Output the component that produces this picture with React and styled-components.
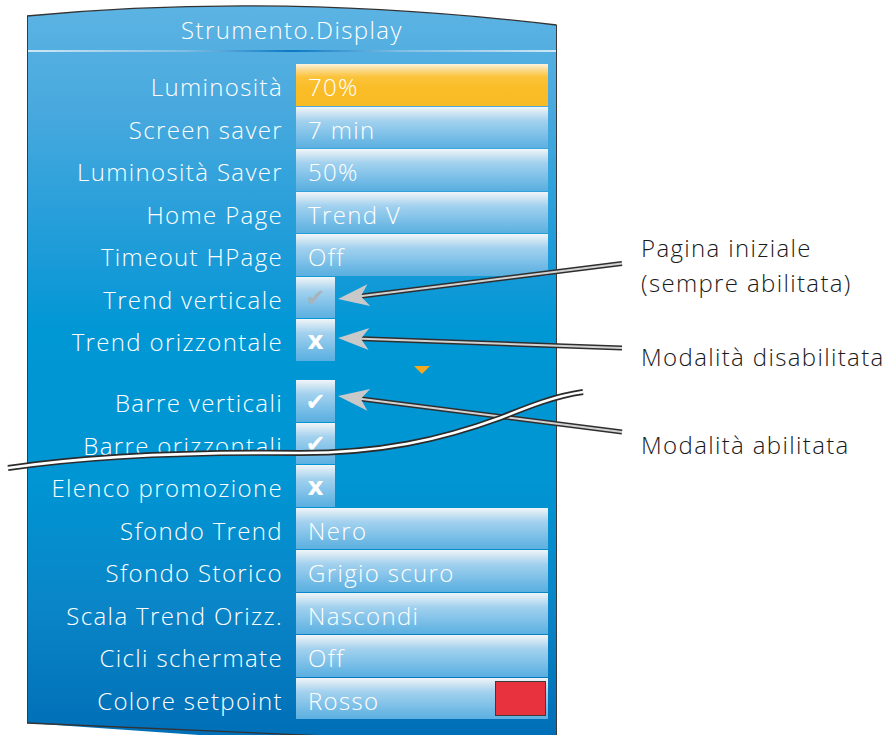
import React from "react";
import styled, { createGlobalStyle } from "styled-components";

const GlobalStyle = createGlobalStyle`
  html, body { margin: 0; padding: 0; background: #ffffff; }
  body { font-family: "Open Sans", "Noto Sans", "Liberation Sans", sans-serif; font-weight: 350; }
`;

const Page = styled.div`
  position: relative;
  width: 887px;
  height: 735px;
  overflow: hidden;
  display: flex;
  align-items: flex-start;
`;

const Screen = styled.div`
  margin-left: 27px;
  width: 530px;
  min-height: 760px;
  box-sizing: border-box;
  border-left: 1px solid #3a3a3a;
  border-right: 1px solid #3a3a3a;
  clip-path: path("M0,16 Q250,-8 530,25 L530,760 L0,723 Z");
  background: linear-gradient(
    to bottom,
    #5db4e3 0px,
    #48a9de 110px,
    #1a9bd8 260px,
    #0097d5 330px,
    #0095d3 480px,
    #0a85c7 610px,
    #006fb7 735px
  );
  display: flex;
  flex-direction: column;
`;

const Title = styled.div`
  height: 50px;
  padding-top: 9px;
  box-sizing: border-box;
  display: flex;
  align-items: center;
  justify-content: center;
  color: #ffffff;
  font-size: 24px;
  letter-spacing: 1.4px;
`;

const Separator = styled.div`
  height: 2px;
  background: linear-gradient(
    to right,
    #cfe7f5 0%,
    #7fbde4 30%,
    #0a78c4 50%,
    #7fbde4 70%,
    #cfe7f5 100%
  );
`;

const Rows = styled.div`
  margin-top: 12px;
  display: flex;
  flex-direction: column;
`;

const Row = styled.div`
  height: 42.5px;
  display: grid;
  grid-template-columns: 268px 252px;
  align-items: start;
`;

const Label = styled.div`
  height: 42px;
  padding-right: 13px;
  padding-top: 3px;
  box-sizing: border-box;
  display: flex;
  align-items: center;
  justify-content: flex-end;
  color: #ffffff;
  font-size: 24px;
  letter-spacing: 1.35px;
  white-space: nowrap;
`;

const boxGradient = `linear-gradient(
  to bottom,
  #f1f5f8 0px,
  #cfe5f3 6px,
  #a2d1ee 14px,
  #88c5ea 24px,
  #6cb8e4 34px,
  #5aafe0 42px
)`;

const activeGradient = `linear-gradient(
  to bottom,
  #fdf3de 0px,
  #fcd98a 6px,
  #fbc33a 13px,
  #fabd28 24px,
  #f9bb24 42px
)`;

const Value = styled.div`
  height: 41.5px;
  box-sizing: border-box;
  padding-left: 12px;
  padding-top: 4px;
  display: flex;
  align-items: center;
  justify-content: space-between;
  color: #ffffff;
  font-size: 24px;
  letter-spacing: 1.35px;
  background: ${(p) => (p.$active ? activeGradient : boxGradient)};
`;

const Check = styled.div`
  width: 39px;
  height: 41.5px;
  display: flex;
  align-items: center;
  justify-content: center;
  padding-top: 2px;
  box-sizing: border-box;
  background: ${boxGradient};
  color: ${(p) => (p.$dim ? "#a8b4bd" : "#ffffff")};
  font-family: "DejaVu Sans", sans-serif;
  font-weight: bold;
  font-size: ${(p) => (p.$cross ? "25px" : "24px")};
`;

const Swatch = styled.div`
  width: 51px;
  height: 35px;
  margin-right: 2px;
  margin-top: -4px;
  box-sizing: border-box;
  background: #e8323e;
  border: 1px solid #3b3b3b;
`;

const Gap = styled.div`
  height: 18.5px;
  padding-left: 386px;
  padding-top: 4px;
  box-sizing: border-box;
`;

const Marker = styled.div`
  width: 0;
  height: 0;
  border-left: 8px solid transparent;
  border-right: 8px solid transparent;
  border-top: 8px solid #f5a81c;
`;

const Notes = styled.div`
  margin-left: 84px;
  padding-top: 230px;
  display: flex;
  flex-direction: column;
  color: #1a1a1a;
  font-size: 24px;
  letter-spacing: 1.35px;
  line-height: 35px;
  white-space: nowrap;
`;

const Note = styled.div`
  margin-top: ${(p) => p.$gap || 0}px;
`;

const Overlay = styled.svg`
  position: absolute;
  left: 0;
  top: 0;
  width: 887px;
  height: 735px;
  pointer-events: none;
`;

const topRows = [
  { label: "Luminosità", value: "70%", active: true },
  { label: "Screen saver", value: "7 min" },
  { label: "Luminosità Saver", value: "50%" },
  { label: "Home Page", value: "Trend V" },
  { label: "Timeout HPage", value: "Off" },
  { label: "Trend verticale", check: "dim" },
  { label: "Trend orizzontale", check: "cross" },
];

const bottomRows = [
  { label: "Barre verticali", check: "on" },
  { label: "Barre orizzontali", check: "on" },
  { label: "Elenco promozione", check: "cross" },
  { label: "Sfondo Trend", value: "Nero" },
  { label: "Sfondo Storico", value: "Grigio scuro" },
  { label: "Scala Trend Orizz.", value: "Nascondi" },
  { label: "Cicli schermate", value: "Off" },
  { label: "Colore setpoint", value: "Rosso", swatch: true },
];

function SettingRow({ item }) {
  return (
    <Row>
      <Label>{item.label}</Label>
      {item.check ? (
        <Check $dim={item.check === "dim"} $cross={item.check === "cross"}>
          {item.check === "cross" ? "x" : "✔"}
        </Check>
      ) : (
        <Value $active={item.active}>
          <span>{item.value}</span>
          {item.swatch && <Swatch />}
        </Value>
      )}
    </Row>
  );
}

function Arrow({ x, y, x2, y2 }) {
  const ang = (Math.atan2(y2 - y, x2 - x) * 180) / Math.PI;
  const d = `M${x + 10},${y + ((y2 - y) * 10) / (x2 - x)} L${x2},${y2}`;
  return (
    <g>
      <path d={d} stroke="#2e2e2e" strokeWidth="5" fill="none" />
      <path d={d} stroke="#d2d2d2" strokeWidth="2" fill="none" />
      <polygon
        points="0,0 31,-11 23,0 31,11"
        fill="#c9c9c9"
        transform={`translate(${x},${y}) rotate(${ang})`}
      />
    </g>
  );
}

export default function App() {
  const wave =
    "M8,468 C90,456 200,452 300,453 C380,453 440,440 500,418 C530,406 555,396 583,392";
  return (
    <>
      <GlobalStyle />
      <Page>
        <Screen>
          <Title>Strumento.Display</Title>
          <Separator />
          <Rows>
            {topRows.map((r) => (
              <SettingRow key={r.label} item={r} />
            ))}
            <Gap>
              <Marker />
            </Gap>
            {bottomRows.map((r) => (
              <SettingRow key={r.label} item={r} />
            ))}
          </Rows>
        </Screen>
        <Notes>
          <Note>Pagina iniziale</Note>
          <Note>(sempre abilitata)</Note>
          <Note $gap={39}>Modalità disabilitata</Note>
          <Note $gap={53}>Modalità abilitata</Note>
        </Notes>
        <Overlay viewBox="0 0 887 735">
          <path d="M27,16 Q277,-8 556.5,25" stroke="#333" strokeWidth="1.3" fill="none" />
          <path d="M27,723 L556.5,746" stroke="#333" strokeWidth="1.3" fill="none" />
          <Arrow x={338} y={299} x2={622} y2={263.5} />
          <Arrow x={338} y={338} x2={622} y2={348} />
          <Arrow x={338} y={396} x2={622} y2={432} />
          <path d={wave} stroke="#2a2a2a" strokeWidth="6" fill="none" />
          <path d={wave} stroke="#ffffff" strokeWidth="2.6" fill="none" />
        </Overlay>
      </Page>
    </>
  );
}
